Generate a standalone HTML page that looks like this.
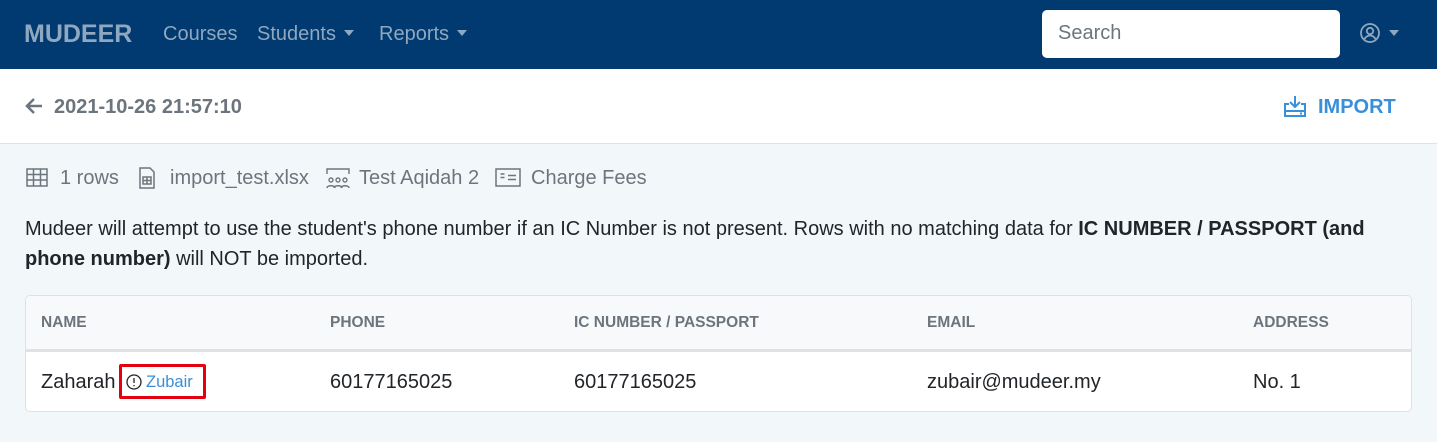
<!DOCTYPE html>
<html><head><meta charset="utf-8"><style>
*{box-sizing:border-box;margin:0;padding:0}
body{width:1437px;height:442px;overflow:hidden;background:#f2f8fa;font-family:"Liberation Sans",sans-serif;color:#212529}
.nav{position:absolute;left:0;top:0;width:1437px;height:69px;background:#003a70}
.nav .t{position:absolute;top:23px;font-size:20px;color:#8fa7bf}
.brand{left:24px;font-weight:bold;font-size:25px!important;top:20px!important;color:#8fa7bf}
.caret{display:inline-block;border-left:5px solid transparent;border-right:5px solid transparent;border-top:6px solid #8fa7bf;vertical-align:middle;margin-left:8px;margin-top:-3px}
.search{position:absolute;left:1042px;top:10px;width:298px;height:48px;background:#fff;border-radius:5px;font-size:20px;color:#6c757d;padding:12px 16px}
.hdr{position:absolute;left:0;top:69px;width:1437px;height:75px;background:#fff;border-bottom:1px solid #dee2e6}
.m{position:absolute;top:167px;font-size:20px;color:#6c757d}
.mi{position:absolute}
.p{position:absolute;left:25px;top:214px;width:1390px;font-size:20px;line-height:30px}
.tbl{position:absolute;left:25px;top:295px;width:1387px;height:117px;background:#fff;border:1px solid #dee2e6;border-radius:5px;overflow:hidden}
.th{position:absolute;top:0;left:0;width:100%;height:56px;background:#f8f9fa;border-bottom:3px solid #dee2e6}
.th div{position:absolute;top:18px;font-size:15.5px;font-weight:bold;color:#6c757d}
.td{position:absolute;top:75px;font-size:20px}
</style></head><body>
<div class="nav">
<div class="t brand">MUDEER</div>
<div class="t" style="left:163px">Courses</div>
<div class="t" style="left:257px">Students<span class="caret"></span></div>
<div class="t" style="left:379px">Reports<span class="caret"></span></div>
<div class="search">Search</div>
<svg style="position:absolute;left:1359px;top:22px" width="22" height="22" viewBox="0 0 22 22" fill="none" stroke="#8fa7bf" stroke-width="1.8"><circle cx="11" cy="11" r="9"/><circle cx="11" cy="9" r="3.2"/><path d="M5.5 17c1.5-2.5 3.5-3.5 5.5-3.5s4 1 5.5 3.5"/></svg>
<span class="caret" style="position:absolute;left:1389px;top:30px;margin:0"></span>
</div>
<div class="hdr">
<svg style="position:absolute;left:25px;top:28px" width="18" height="18" viewBox="0 0 18 18" fill="none" stroke="#6c757d" stroke-width="2.5"><path d="M17 9H3M9 2L2 9l7 7"/></svg>
<div style="position:absolute;left:54px;top:27px;font-size:20px;font-weight:bold;color:#6c757d">2021-10-26 21:57:10</div>
<svg style="position:absolute;left:1283px;top:26px" width="24" height="23" viewBox="0 0 24 23" fill="none" stroke="#3a8fdb" stroke-width="2"><path d="M12 1v11M7 7l5 5 5-5M6 9H2v12h20V9h-4M2 16h20M17 18.5h2"/></svg>
<div style="position:absolute;left:1318px;top:27px;font-size:20px;font-weight:bold;color:#3a8fdb">IMPORT</div>
</div>
<svg class="mi" style="left:26px;top:168px" width="22" height="20" viewBox="0 0 22 20" fill="none" stroke="#6c757d" stroke-width="1.5"><rect x="1" y="1" width="20" height="17"/><path d="M1 6.5h20M1 12h20M7.5 1v17M14.5 1v17"/></svg>
<div class="m" style="left:60px">1 rows</div>
<svg class="mi" style="left:138px;top:167px" width="18" height="22" viewBox="0 0 18 22" fill="none" stroke="#6c757d" stroke-width="1.5"><path d="M2 1h10l4 4v16H2z"/><rect x="5" y="10" width="8" height="7"/><path d="M5 13.5h8M9 10v7"/></svg>
<div class="m" style="left:170px">import_test.xlsx</div>
<svg class="mi" style="left:325px;top:167px" width="26" height="22" viewBox="0 0 26 22" fill="none" stroke="#6c757d" stroke-width="1.4"><path d="M2 7V2h22v5"/><circle cx="6" cy="13" r="2"/><circle cx="13" cy="13" r="2"/><circle cx="20" cy="13" r="2"/><path d="M2 21c0-3 8-3 8 0M9 21c0-3 8-3 8 0M16 21c0-3 8-3 8 0"/></svg>
<div class="m" style="left:359px">Test Aqidah 2</div>
<svg class="mi" style="left:495px;top:168px" width="26" height="20" viewBox="0 0 26 20" fill="none" stroke="#6c757d" stroke-width="1.5"><rect x="1" y="1" width="24" height="17"/><path d="M13 7.5h8M13 11.5h8M5.5 6h4M5.5 9.5h4"/></svg>
<div class="m" style="left:531px">Charge Fees</div>
<div class="p">Mudeer will attempt to use the student's phone number if an IC Number is not present. Rows with no matching data for <b>IC NUMBER / PASSPORT (and phone number)</b> will NOT be imported.</div>
<div class="tbl">
<div class="th"><div style="left:15px">NAME</div><div style="left:304px">PHONE</div><div style="left:548px">IC NUMBER / PASSPORT</div><div style="left:901px">EMAIL</div><div style="left:1227px">ADDRESS</div></div>
<div class="td" style="left:15px">Zaharah</div>
<div style="position:absolute;left:93px;top:68px;width:87px;height:35px;border:3px solid #e3000f;border-radius:2px"></div>
<svg style="position:absolute;left:100px;top:78px" width="16" height="16" viewBox="0 0 16 16" fill="none" stroke="#212529" stroke-width="1.3"><circle cx="8" cy="8" r="7"/><path d="M8 4v5M8 11v1.3"/></svg>
<div style="position:absolute;left:120px;top:77px;font-size:16.5px;color:#3a8fdb">Zubair</div>
<div class="td" style="left:304px">60177165025</div>
<div class="td" style="left:548px">60177165025</div>
<div class="td" style="left:901px">zubair@mudeer.my</div>
<div class="td" style="left:1227px">No. 1</div>
</div>
</body></html>
